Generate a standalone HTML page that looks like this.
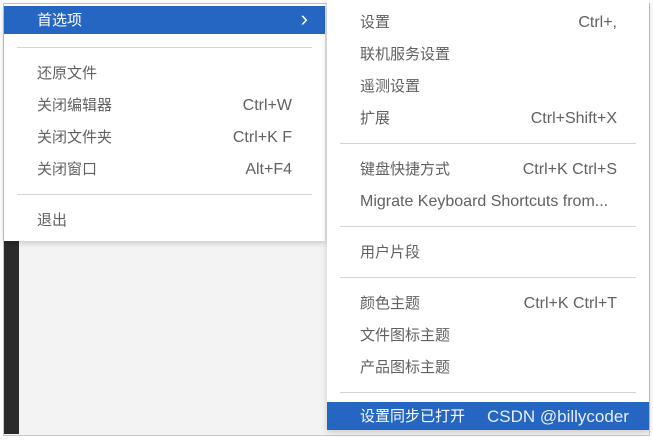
<!DOCTYPE html><html><head><style>
body{margin:0;width:653px;height:440px;background:#fff;position:relative;overflow:hidden;font-family:"Liberation Sans","Noto Sans CJK SC",sans-serif;font-size:15px;color:#616161}
.frame{position:absolute;left:3px;top:3px;width:645px;height:431px;border:1px solid #c8c8c8;background:#f3f3f3}
.dark{position:absolute;left:4px;top:241px;width:15px;height:193px;background:#2b2b2b}
.m{position:absolute;background:#fff;box-shadow:0 2px 6px rgba(0,0,0,.18)}
.r{position:absolute;left:0;right:0;height:28px;line-height:30px}
.r .l{position:absolute}
.r .s{position:absolute;font-size:16px}
.e{font-size:16px}
.hl{background:#2566c2;color:#fff}
.sep{position:absolute;height:1px;background:#d4d4d4}
</style></head><body>
<div class="frame"></div>
<div class="dark"></div>
<div class="m" style="left:4px;top:4px;width:321px;height:237px">
<div class="r hl" style="top:2px"><span class="l" style="left:33px">首选项</span><span class="s" style="right:17px;font-size:22px;line-height:26px">&#x203A;</span></div>
<div class="sep" style="left:13px;right:13px;top:43px"></div>
<div class="r" style="top:55px"><span class="l" style="left:33px">还原文件</span></div>
<div class="r" style="top:87px"><span class="l" style="left:33px">关闭编辑器</span><span class="s" style="right:33px">Ctrl+W</span></div>
<div class="r" style="top:119px"><span class="l" style="left:33px">关闭文件夹</span><span class="s" style="right:33px">Ctrl+K F</span></div>
<div class="r" style="top:151px"><span class="l" style="left:33px">关闭窗口</span><span class="s" style="right:33px">Alt+F4</span></div>
<div class="sep" style="left:13px;right:13px;top:190px"></div>
<div class="r" style="top:202px"><span class="l" style="left:33px">退出</span></div>
</div>
<div class="m" style="left:327px;top:0;width:322px;height:430px">
<div class="r" style="top:8px"><span class="l" style="left:33px">设置</span><span class="s" style="right:32px">Ctrl+,</span></div>
<div class="r" style="top:40px"><span class="l" style="left:33px">联机服务设置</span></div>
<div class="r" style="top:72px"><span class="l" style="left:33px">遥测设置</span></div>
<div class="r" style="top:104px"><span class="l" style="left:33px">扩展</span><span class="s" style="right:32px">Ctrl+Shift+X</span></div>
<div class="sep" style="left:13px;right:13px;top:143px"></div>
<div class="r" style="top:155px"><span class="l" style="left:33px">键盘快捷方式</span><span class="s" style="right:32px">Ctrl+K Ctrl+S</span></div>
<div class="r" style="top:187px"><span class="l e" style="left:33px">Migrate Keyboard Shortcuts from...</span></div>
<div class="sep" style="left:13px;right:13px;top:226px"></div>
<div class="r" style="top:238px"><span class="l" style="left:33px">用户片段</span></div>
<div class="sep" style="left:13px;right:13px;top:277px"></div>
<div class="r" style="top:289px"><span class="l" style="left:33px">颜色主题</span><span class="s" style="right:32px">Ctrl+K Ctrl+T</span></div>
<div class="r" style="top:321px"><span class="l" style="left:33px">文件图标主题</span></div>
<div class="r" style="top:353px"><span class="l" style="left:33px">产品图标主题</span></div>
<div class="sep" style="left:13px;right:13px;top:392px"></div>
<div class="r hl" style="top:402px"><span class="l" style="left:33px">设置同步已打开</span><span class="s" style="left:160px;font-size:17px;color:#e8eef8">CSDN @billycoder</span></div>
</div>
</body></html>
